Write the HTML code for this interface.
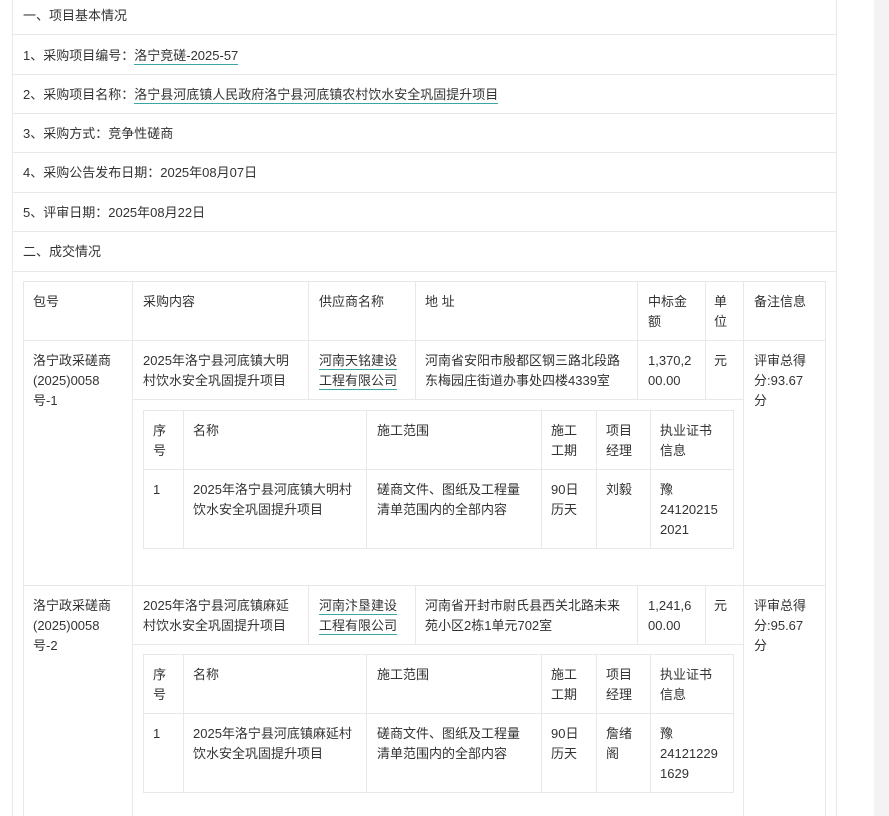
<!DOCTYPE html>
<html><head><meta charset="utf-8"><style>
body{margin:0;width:889px;height:816px;overflow:hidden;background:#fff;position:relative;font-family:"Liberation Sans","Noto Sans CJK SC",sans-serif;font-size:13px;color:#333}
.h{position:absolute;height:1px;background:#e8e8e8}
.v{position:absolute;width:1px;background:#e8e8e8}
.t{position:absolute;line-height:20px;white-space:nowrap;margin-top:1px}
.u{border-bottom:1px solid #3aa6a6;padding-bottom:1px}
</style></head><body>
<div style="position:absolute;left:874px;top:0;width:15px;height:816px;background:#f3f3f5"></div>
<div class="v" style="left:12px;top:0;height:816px"></div>
<div class="v" style="left:836px;top:0;height:816px"></div>
<div class="h" style="left:12px;top:34px;width:825px"></div>
<div class="h" style="left:12px;top:74px;width:825px"></div>
<div class="h" style="left:12px;top:113px;width:825px"></div>
<div class="h" style="left:12px;top:152px;width:825px"></div>
<div class="h" style="left:12px;top:192px;width:825px"></div>
<div class="h" style="left:12px;top:231px;width:825px"></div>
<div class="h" style="left:12px;top:271px;width:825px"></div>
<div class="t" style="left:23px;top:5px">一、项目基本情况</div>
<div class="t" style="left:23px;top:45px">1、采购项目编号：<span class="u">洛宁竞磋-2025-57</span></div>
<div class="t" style="left:23px;top:84px">2、采购项目名称：<span class="u">洛宁县河底镇人民政府洛宁县河底镇农村饮水安全巩固提升项目</span></div>
<div class="t" style="left:23px;top:123px">3、采购方式：竞争性磋商</div>
<div class="t" style="left:23px;top:162px">4、采购公告发布日期：2025年08月07日</div>
<div class="t" style="left:23px;top:202px">5、评审日期：2025年08月22日</div>
<div class="t" style="left:23px;top:241px">二、成交情况</div>

<div class="h" style="left:23px;top:281px;width:803px"></div>
<div class="h" style="left:23px;top:340px;width:803px"></div>
<div class="h" style="left:132px;top:399px;width:612px"></div>
<div class="h" style="left:23px;top:585px;width:803px"></div>
<div class="h" style="left:132px;top:644px;width:612px"></div>
<div class="v" style="left:23px;top:281px;height:535px"></div>
<div class="v" style="left:825px;top:281px;height:535px"></div>
<div class="v" style="left:132px;top:281px;height:535px"></div>
<div class="v" style="left:743px;top:281px;height:535px"></div>
<div class="v" style="left:308px;top:281px;height:118px"></div>
<div class="v" style="left:415px;top:281px;height:118px"></div>
<div class="v" style="left:637px;top:281px;height:118px"></div>
<div class="v" style="left:705px;top:281px;height:118px"></div>
<div class="v" style="left:308px;top:585px;height:59px"></div>
<div class="v" style="left:415px;top:585px;height:59px"></div>
<div class="v" style="left:637px;top:585px;height:59px"></div>
<div class="v" style="left:705px;top:585px;height:59px"></div>

<div class="t" style="left:33px;top:291px">包号</div>
<div class="t" style="left:143px;top:291px">采购内容</div>
<div class="t" style="left:319px;top:291px">供应商名称</div>
<div class="t" style="left:425px;top:291px">地 址</div>
<div class="t" style="left:648px;top:291px">中标金<br>额</div>
<div class="t" style="left:714px;top:291px">单<br>位</div>
<div class="t" style="left:754px;top:291px">备注信息</div>

<div class="t" style="left:33px;top:350px">洛宁政采磋商<br>(2025)0058<br>号-1</div>
<div class="t" style="left:143px;top:350px">2025年洛宁县河底镇大明<br>村饮水安全巩固提升项目</div>
<div class="t" style="left:319px;top:350px"><span class="u">河南天铭建设</span><br><span class="u">工程有限公司</span></div>
<div class="t" style="left:425px;top:350px">河南省安阳市殷都区钢三路北段路<br>东梅园庄街道办事处四楼4339室</div>
<div class="t" style="left:648px;top:350px">1,370,2<br>00.00</div>
<div class="t" style="left:714px;top:350px">元</div>
<div class="t" style="left:754px;top:350px">评审总得<br>分:93.67<br>分</div>

<div class="t" style="left:33px;top:595px">洛宁政采磋商<br>(2025)0058<br>号-2</div>
<div class="t" style="left:143px;top:595px">2025年洛宁县河底镇麻延<br>村饮水安全巩固提升项目</div>
<div class="t" style="left:319px;top:595px"><span class="u">河南汴垦建设</span><br><span class="u">工程有限公司</span></div>
<div class="t" style="left:425px;top:595px">河南省开封市尉氏县西关北路未来<br>苑小区2栋1单元702室</div>
<div class="t" style="left:648px;top:595px">1,241,6<br>00.00</div>
<div class="t" style="left:714px;top:595px">元</div>
<div class="t" style="left:754px;top:595px">评审总得<br>分:95.67<br>分</div>

<div style="position:absolute;left:143px;top:410px;width:589px;height:137px;border:1px solid #e8e8e8"></div>
<div class="h" style="left:143px;top:469px;width:590px"></div>
<div class="v" style="left:183px;top:410px;height:138px"></div>
<div class="v" style="left:366px;top:410px;height:138px"></div>
<div class="v" style="left:541px;top:410px;height:138px"></div>
<div class="v" style="left:596px;top:410px;height:138px"></div>
<div class="v" style="left:650px;top:410px;height:138px"></div>
<div class="t" style="left:153px;top:420px">序<br>号</div>
<div class="t" style="left:193px;top:420px">名称</div>
<div class="t" style="left:377px;top:420px">施工范围</div>
<div class="t" style="left:551px;top:420px">施工<br>工期</div>
<div class="t" style="left:606px;top:420px">项目<br>经理</div>
<div class="t" style="left:660px;top:420px">执业证书<br>信息</div>
<div class="t" style="left:153px;top:479px">1</div>
<div class="t" style="left:193px;top:479px">2025年洛宁县河底镇大明村<br>饮水安全巩固提升项目</div>
<div class="t" style="left:377px;top:479px">磋商文件、图纸及工程量<br>清单范围内的全部内容</div>
<div class="t" style="left:551px;top:479px">90日<br>历天</div>
<div class="t" style="left:606px;top:479px">刘毅</div>
<div class="t" style="left:660px;top:479px">豫<br>24120215<br>2021</div>

<div style="position:absolute;left:143px;top:654px;width:589px;height:137px;border:1px solid #e8e8e8"></div>
<div class="h" style="left:143px;top:713px;width:590px"></div>
<div class="v" style="left:183px;top:654px;height:138px"></div>
<div class="v" style="left:366px;top:654px;height:138px"></div>
<div class="v" style="left:541px;top:654px;height:138px"></div>
<div class="v" style="left:596px;top:654px;height:138px"></div>
<div class="v" style="left:650px;top:654px;height:138px"></div>
<div class="t" style="left:153px;top:664px">序<br>号</div>
<div class="t" style="left:193px;top:664px">名称</div>
<div class="t" style="left:377px;top:664px">施工范围</div>
<div class="t" style="left:551px;top:664px">施工<br>工期</div>
<div class="t" style="left:606px;top:664px">项目<br>经理</div>
<div class="t" style="left:660px;top:664px">执业证书<br>信息</div>
<div class="t" style="left:153px;top:723px">1</div>
<div class="t" style="left:193px;top:723px">2025年洛宁县河底镇麻延村<br>饮水安全巩固提升项目</div>
<div class="t" style="left:377px;top:723px">磋商文件、图纸及工程量<br>清单范围内的全部内容</div>
<div class="t" style="left:551px;top:723px">90日<br>历天</div>
<div class="t" style="left:606px;top:723px">詹绪<br>阁</div>
<div class="t" style="left:660px;top:723px">豫<br>24121229<br>1629</div>
</body></html>
